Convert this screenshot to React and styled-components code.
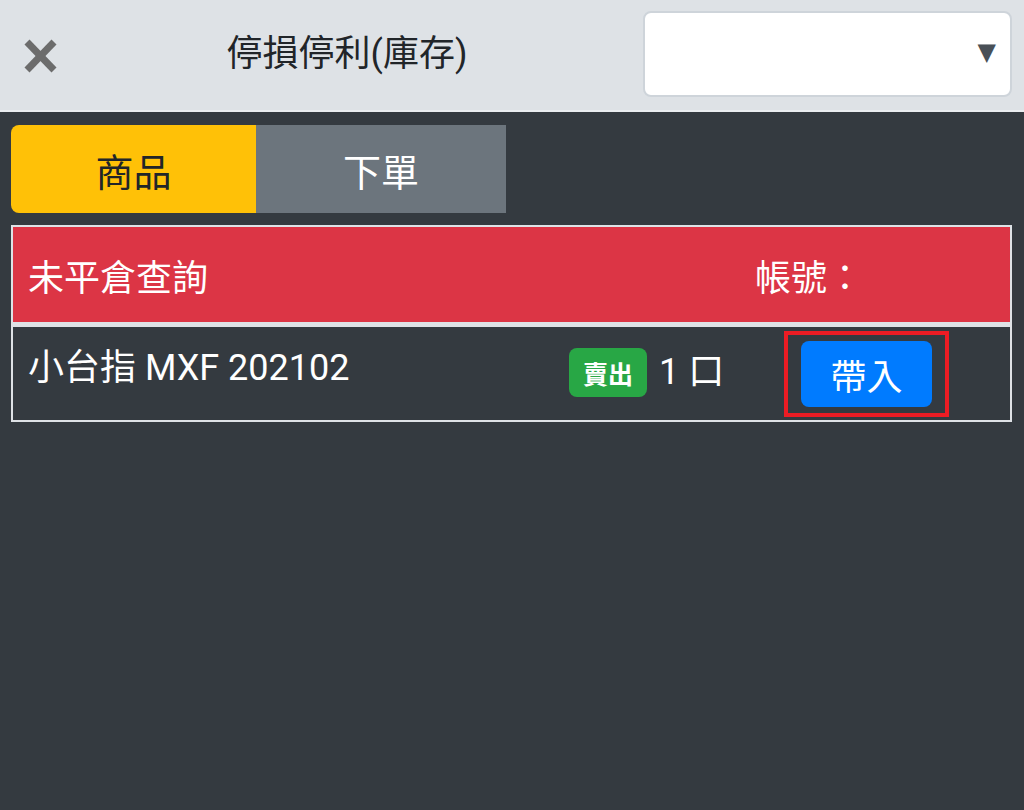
import React from 'react'
import styled, { createGlobalStyle } from 'styled-components'

const GlobalStyle = createGlobalStyle`
  *, *::before, *::after {
    box-sizing: border-box;
  }
  html, body {
    margin: 0;
    padding: 0;
    background: #343a40;
    font-family: Roboto, "Noto Sans CJK TC", sans-serif;
  }
  #root {
    min-height: 100vh;
    background: #343a40;
  }
`

const positions = [
  { name: '小台指 MXF 202102', side: '賣出', qty: '1 口' },
]

export default function App() {
  return (
    <Page>
      <GlobalStyle />
      <TopBar>
        <CloseBtn aria-label="close">
          <svg width="33" height="34" viewBox="0 0 33 34">
            <line x1="3" y1="3" x2="30" y2="31" stroke="#6c6c6c" strokeWidth="7" />
            <line x1="30" y1="3" x2="3" y2="31" stroke="#6c6c6c" strokeWidth="7" />
          </svg>
        </CloseBtn>
        <Title>停損停利(庫存)</Title>
        <SelectBox>
          <Arrow>▼</Arrow>
        </SelectBox>
      </TopBar>

      <Content>
        <Tabs>
          <Tab $active>商品</Tab>
          <Tab>下單</Tab>
        </Tabs>

        <Table>
          <HeadRow>
            <HeadTitle>未平倉查詢</HeadTitle>
            <HeadAccount>帳號：</HeadAccount>
          </HeadRow>
          {positions.map((p) => (
            <BodyRow key={p.name}>
              <Product>{p.name}</Product>
              <QtyCell>
                <SideBadge>{p.side}</SideBadge>
                <Qty>{p.qty}</Qty>
              </QtyCell>
              <Highlight>
                <LoadBtn>帶入</LoadBtn>
              </Highlight>
            </BodyRow>
          ))}
        </Table>
      </Content>
    </Page>
  )
}

const Page = styled.div`
  min-height: 810px;
  background: #343a40;
`

const TopBar = styled.header`
  height: 112px;
  display: flex;
  align-items: center;
  padding: 0 12px 2px 24px;
  background: #dee2e6;
  border-bottom: 2px solid #e9ecef;
`

const CloseBtn = styled.button`
  width: 33px;
  height: 34px;
  padding: 0;
  border: none;
  background: transparent;
  display: flex;
  align-items: center;
  justify-content: center;
  margin-top: 4px;
`

const Title = styled.h1`
  flex: 1;
  margin: 0 0 0 -6px;
  text-align: center;
  font-size: 36px;
  font-weight: 400;
  color: #212529;
  line-height: 1;
`

const SelectBox = styled.div`
  width: 369px;
  height: 86px;
  border: 2px solid #ced4da;
  border-radius: 8px;
  background: #fff;
  display: flex;
  align-items: center;
  justify-content: flex-end;
  padding-right: 14px;
`

const Arrow = styled.span`
  font-family: "DejaVu Sans", sans-serif;
  font-size: 24px;
  line-height: 1;
  color: #495057;
  margin-top: -4px;
`

const Content = styled.main`
  padding: 13px 12px 0 11px;
`

const Tabs = styled.div`
  display: flex;
  width: 495px;
  height: 88px;
`

const Tab = styled.div`
  flex: ${(p) => (p.$active ? '0 0 245px' : '1')};
  display: flex;
  align-items: center;
  justify-content: center;
  font-size: 38px;
  background: ${(p) => (p.$active ? '#ffc107' : '#6c757d')};
  color: ${(p) => (p.$active ? '#212529' : '#fff')};
  border-radius: ${(p) => (p.$active ? '8px 0 0 8px' : '0')};
`

const Table = styled.section`
  margin-top: 12px;
  border: 2px solid #dee2e6;
`

const HeadRow = styled.div`
  height: 100px;
  display: flex;
  align-items: center;
  background: #dc3545;
  color: #fff;
  font-size: 36px;
  border-bottom: 5px solid #dee2e6;
`

const HeadTitle = styled.div`
  flex: 1;
  padding-left: 15px;
`

const HeadAccount = styled.div`
  width: 255px;
`

const BodyRow = styled.div`
  height: 93px;
  display: flex;
  align-items: center;
  color: #fff;
  font-size: 36px;
`

const Product = styled.div`
  width: 556px;
  padding-left: 15px;
  margin-bottom: 20px;
`

const QtyCell = styled.div`
  width: 215px;
  display: flex;
  align-items: center;
  gap: 12px;
`

const SideBadge = styled.span`
  width: 78px;
  height: 49px;
  border-radius: 8px;
  background: #28a745;
  color: #fff;
  font-size: 25px;
  font-weight: 700;
  display: flex;
  align-items: center;
  justify-content: center;
  margin-bottom: 2px;
`

const Qty = styled.span`
  margin-bottom: 12px;
`

const Highlight = styled.div`
  width: 165px;
  height: 86px;
  border: 4px solid #ec1c24;
  display: flex;
  align-items: center;
  justify-content: center;
  margin-top: 1px;
`

const LoadBtn = styled.button`
  width: 131px;
  height: 66px;
  border: none;
  border-radius: 8px;
  background: #007bff;
  color: #fff;
  font-family: inherit;
  font-size: 36px;
  padding: 0;
  margin-top: 0;
`
